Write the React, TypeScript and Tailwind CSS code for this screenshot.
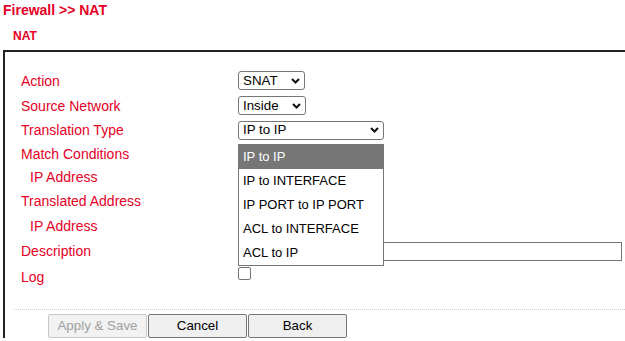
import React from 'react'

// ==========================================
// TIPOS Y DATOS
// ==========================================
interface FormRow {
  label: string
  indent?: boolean
  height: number
  control?: React.ReactNode
}

const RED = 'text-[#e60026]'

const translationOptions = [
  'IP to IP',
  'IP to INTERFACE',
  'IP PORT to IP PORT',
  'ACL to INTERFACE',
  'ACL to IP',
]

// ==========================================
// CONTROLES
// ==========================================
const Chevron: React.FC = () => (
  <svg width="9" height="6" viewBox="0 0 9 6" className="shrink-0">
    <polyline points="1,1 4.5,4.5 8,1" fill="none" stroke="#111" strokeWidth="2" />
  </svg>
)

const FakeSelect: React.FC<{ value: string; width: string }> = ({ value, width }) => (
  <div
    className={`flex h-[19px] ${width} items-center justify-between rounded-[3px] border border-[#767676] bg-white pl-[4px] pr-[4px] text-[13.33px] leading-none text-black`}
  >
    <span>{value}</span>
    <Chevron />
  </div>
)

const TextInput: React.FC<{ width: string }> = ({ width }) => (
  <div className={`h-[19px] ${width} border border-[#767676] bg-white`} />
)

// ==========================================
// COMPONENTE PRINCIPAL
// ==========================================
export default function App() {
  const rows: FormRow[] = [
    { label: 'Action', height: 25, control: <FakeSelect value="SNAT" width="w-[67px]" /> },
    { label: 'Source Network', height: 25, control: <FakeSelect value="Inside" width="w-[68px]" /> },
    {
      label: 'Translation Type',
      height: 24,
      control: (
        <div className="relative">
          <FakeSelect value="IP to IP" width="w-[146px]" />
          {/* Lista desplegada */}
          <div className="absolute left-0 top-[23px] z-10 w-[146px] border border-[#767676] bg-white text-[13px] text-black">
            {translationOptions.map((opt, i) => (
              <div
                key={opt}
                className={`flex h-[24px] items-center pl-[4px] ${i === 0 ? 'bg-[#767676] text-white' : ''}`}
              >
                {opt}
              </div>
            ))}
          </div>
        </div>
      ),
    },
    { label: 'Match Conditions', height: 23 },
    { label: 'IP Address', indent: true, height: 24, control: <TextInput width="w-[140px]" /> },
    { label: 'Translated Address', height: 24 },
    { label: 'IP Address', indent: true, height: 25, control: <TextInput width="w-[140px]" /> },
    { label: 'Description', height: 26, control: <TextInput width="w-[384px]" /> },
  ]

  return (
    <div className="h-[341px] w-[625px] overflow-hidden bg-white pl-[3px] pt-[2px] font-['Liberation_Sans',Arial,sans-serif]">
      {/* Header */}
      <h1 className={`text-[14px] font-bold leading-4 ${RED}`}>Firewall &gt;&gt; NAT</h1>
      <h2 className={`ml-[10px] mt-[11px] text-[12px] font-bold leading-[14px] ${RED}`}>NAT</h2>

      {/* Panel */}
      <div className="mt-[7px] w-[720px] border-l-2 border-t-2 border-[#222] pt-[16px]">
        <div className="pl-[16px]">
          {rows.map((row, idx) => (
            <div key={idx} className="flex items-center" style={{ height: row.height }}>
              <div className={`w-[217px] text-[14px] leading-4 ${RED} ${row.indent ? 'pl-[9px]' : ''}`}>
                {row.label}
              </div>
              {row.control}
            </div>
          ))}

          {/* Log */}
          <div className="flex h-[25px]">
            <div className={`w-[217px] self-center text-[14px] leading-4 ${RED}`}>Log</div>
            <div className="mt-[3px] h-[13px] w-[13px] rounded-[2px] border border-[#767676] bg-white" />
          </div>
        </div>

        {/* Separador */}
        <div className="ml-[9px] mt-[20px] border-t border-dotted border-[#cfcfcf]" />

        {/* Botones */}
        <div className="ml-[43px] mt-[4px] flex gap-[1px] text-[13.33px]">
          <button
            disabled
            className="h-[24px] w-[99px] rounded-[2px] border border-[#c8c8c8] bg-[#f2f2f2] text-[#a0a0a0]"
          >
            Apply &amp; Save
          </button>
          <button className="h-[24px] w-[99px] rounded-[2px] border border-[#767676] bg-[#efefef] text-black">
            Cancel
          </button>
          <button className="h-[24px] w-[99px] rounded-[2px] border border-[#767676] bg-[#efefef] text-black">
            Back
          </button>
        </div>
      </div>
    </div>
  )
}
